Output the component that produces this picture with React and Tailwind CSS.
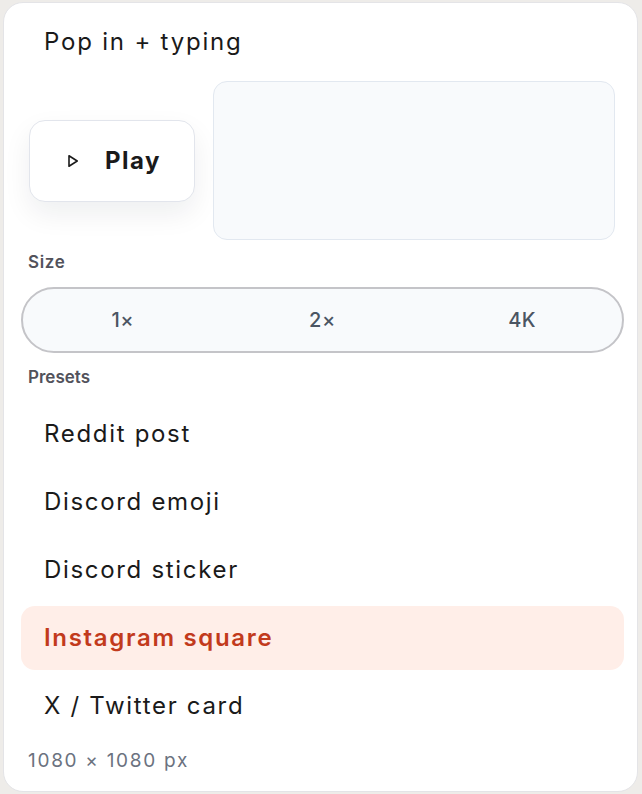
import React, { useState } from 'react';

const presets = [
    { name: 'Reddit post', size: '1200 × 628 px' },
    { name: 'Discord emoji', size: '128 × 128 px' },
    { name: 'Discord sticker', size: '320 × 320 px' },
    { name: 'Instagram square', size: '1080 × 1080 px' },
    { name: 'X / Twitter card', size: '1200 × 675 px' },
];

const sizes = ['1×', '2×', '4K'];

function PlayIcon() {
    return (
        <svg width="12" height="14" viewBox="0 0 12 14" fill="none">
            <path d="M2 1.8 L10.2 7 L2 12.2 Z" stroke="#1a1a1a" strokeWidth="1.6" strokeLinejoin="round" />
        </svg>
    );
}

export default function App() {
    const [active, setActive] = useState(3);
    const [scale, setScale] = useState(null);

    return (
        <div className="min-h-screen bg-[#eeece9] pt-[2px] pl-[3px] pr-[4px] pb-[2px] font-['Inter','Liberation_Sans',sans-serif]">
            <div className="h-[790px] bg-white rounded-[20px] border border-[#e4e4e7] flex flex-col pl-[17px] pr-[13px] pt-[7px]">
                {/* Title */}
                <div className="h-[64px] pl-[23px] flex items-center text-[24px] text-[#1a1a1a] tracking-[0.075em]">
                    Pop in + typing
                </div>

                {/* Player + preview */}
                <div className="mt-[7px] h-[159px] flex items-center gap-[18px]">
                    <button className="ml-[8px] w-[166px] h-[82px] pl-[4px] rounded-[16px] bg-white border border-[#e2e5ec] shadow-[0_12px_28px_rgba(15,23,42,0.07)] flex items-center justify-center gap-[26px]">
                        <PlayIcon />
                        <span className="text-[24px] font-bold text-[#1a1a1a] tracking-[0.06em]">Play</span>
                    </button>
                    <div className="flex-1 mr-[9px] h-full rounded-[14px] border border-[#e2e8f0] bg-[#f8fafc]"></div>
                </div>

                {/* Size */}
                <div className="mt-[12px] pl-[7px] h-[22px] flex items-center text-[17px] font-semibold text-[#52525b] tracking-[0.04em]">
                    Size
                </div>
                <div className="mt-[13px] h-[66px] rounded-full border-2 border-[#c4c4c8] bg-[#f8fafc] grid grid-cols-3">
                    {sizes.map((s, i) => (
                        <button
                            key={s}
                            onClick={() => setScale(i)}
                            className="flex items-center justify-center text-[20px] font-medium text-[#4b5563] tracking-[0.03em]"
                        >
                            {s}
                        </button>
                    ))}
                </div>

                {/* Presets */}
                <div className="mt-[14px] pl-[7px] h-[22px] flex items-center text-[17px] font-semibold text-[#52525b]">
                    Presets
                </div>
                <div className="mt-[13px] flex flex-col gap-[4px]">
                    {presets.map((p, i) => (
                        <button
                            key={p.name}
                            onClick={() => setActive(i)}
                            className={`h-[64px] pl-[23px] pr-6 rounded-[14px] flex items-center text-left text-[24px] tracking-[0.07em] ${i === active ? 'bg-[#ffeee8] text-[#c23a1c] font-semibold' : 'text-[#1a1a1a]'}`}
                        >
                            {p.name}
                        </button>
                    ))}
                </div>

                <div className="mt-[9px] pl-[7px] text-[19px] text-[#6b7280] tracking-[0.09em]">
                    {presets[active].size}
                </div>
            </div>
        </div>
    );
}
